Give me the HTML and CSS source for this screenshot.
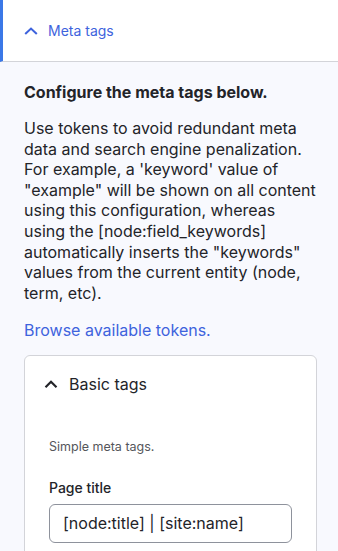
FILE: index.html
```html
<!DOCTYPE html>
<html>
<head>
<meta charset="utf-8">
<link rel="stylesheet" href="styles.css">
</head>
<body>
<div class="details">
  <div class="summary">
    <svg class="chev" width="14" height="10" viewBox="0 0 14 10"><path d="M1.2 8 L7 2.6 L12.8 8" fill="none" stroke="currentColor" stroke-width="2.1"/></svg>
    <span>Meta tags</span>
  </div>
  <div class="content">
    <p class="lead">Configure the meta tags below.</p>
    <p class="desc">Use tokens to avoid redundant meta data and search engine penalization. For example, a 'keyword' value of "example" will be shown on all content using this configuration, whereas using the [node:field_keywords] automatically inserts the "keywords" values from the current entity (node, term, etc).</p>
    <a class="link" href="#">Browse available tokens.</a>
    <div class="card">
      <div class="card-summary">
        <svg class="chev2" width="14" height="10" viewBox="0 0 14 10"><path d="M1.5 8.2 L7 2.8 L12.5 8.2" fill="none" stroke="currentColor" stroke-width="2.2"/></svg>
        <span>Basic tags</span>
      </div>
      <div class="card-body">
        <p class="hint">Simple meta tags.</p>
        <label class="label">Page title</label>
        <div class="input">[node:title] | [site:name]</div>
      </div>
    </div>
  </div>
</div>
</body>
</html>
```
FILE: styles.css
```css
html, body { margin: 0; padding: 0; }
body {
  font-family: Inter, "Noto Sans", sans-serif;
  color: #232429;
  background: #f8f9fe;
  width: 338px;
  height: 551px;
  overflow: hidden;
}
.summary {
  display: flex;
  align-items: center;
  gap: 10px;
  height: 62px;
  padding-left: 24px;
  background: #fff;
  border-left: 3px solid #3b78e7;
  border-bottom: 1px solid #d3d4d9;
  box-sizing: border-box;
  color: #3e63dd;
  font-size: 14px;
}
.summary .chev { margin-left: -3px; }
.content {
  padding: 0 21px 0 24px;
}
.lead {
  margin: 20px 0 0;
  font-weight: 700;
  font-size: 16px;
  line-height: 20px;
}
.desc {
  margin: 16px 0 0;
  font-size: 16px;
  line-height: 20.6px;
}
.link {
  display: block;
  margin-top: 17px;
  font-size: 16px;
  line-height: 20px;
  color: #3e63dd;
  text-decoration: none;
}
.card {
  margin-top: 15px;
  background: #fff;
  border: 1px solid #d3d4d9;
  border-radius: 6px;
  height: 220px;
}
.card-summary {
  display: flex;
  align-items: center;
  gap: 11px;
  height: 56px;
  padding-left: 19px;
  font-size: 16px;
}
.chev2 { color: #232429; }
.card-body { padding: 0 24px; }
.hint {
  margin: 26px 0 0;
  font-size: 12.5px;
  color: #55565b;
  line-height: 18px;
}
.label {
  display: block;
  margin-top: 23px;
  font-size: 14px;
  font-weight: 500;
  line-height: 18px;
}
.input {
  margin-top: 7px;
  width: 243px;
  height: 39px;
  box-sizing: border-box;
  border: 1px solid #8e929c;
  border-radius: 6px;
  padding: 0 13px;
  font-size: 16px;
  line-height: 37px;
  background: #fff;
}
```
